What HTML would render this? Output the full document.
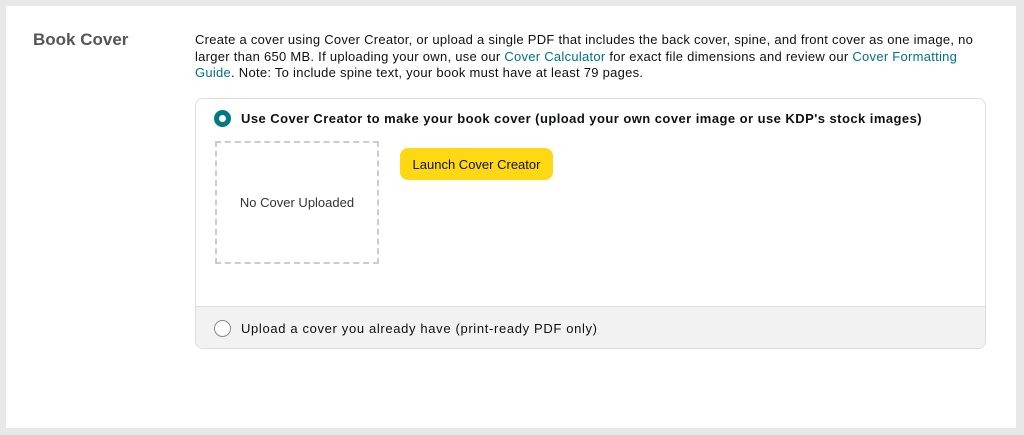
<!DOCTYPE html>
<html><head><meta charset="utf-8"><style>
*{box-sizing:border-box;margin:0;padding:0}
body{width:1024px;height:435px;background:#e8e8e8;font-family:"Liberation Sans",sans-serif;color:#0f1111;position:relative;overflow:hidden}
.panel{position:absolute;left:6px;top:6px;width:1010px;height:422px;background:#fff}
h2{position:absolute;left:33px;top:30px;font-size:17px;font-weight:bold;color:#555}
.desc{position:absolute;left:195px;top:32px;width:800px;font-size:13px;line-height:16.5px;letter-spacing:0.27px;white-space:nowrap}
a{color:#007185;text-decoration:none}
.box{position:absolute;left:195px;top:98px;width:791px;height:251px;border:1px solid #ddd;border-radius:8px;overflow:hidden;background:#fff}
.r1{position:absolute;left:18px;top:11px;font-size:13px;font-weight:bold;display:flex;align-items:center;letter-spacing:0.45px;white-space:nowrap}
.rad{width:17px;height:17px;border-radius:50%;margin-right:10px;flex:none}
.on{border:5px solid #007b86;background:#fff}
.off{border:1px solid #888;background:#fff}
.ph{position:absolute;left:19px;top:42px;width:164px;height:123px;border:2px dashed #ccc;font-size:13px;color:#333;display:flex;align-items:center;justify-content:center}
.btn{position:absolute;left:204px;top:49px;width:153px;height:32px;background:#ffd814;border-radius:8px;font-size:13px;display:flex;align-items:center;justify-content:center;color:#0f1111}
.ft{position:absolute;left:0;top:207px;width:100%;height:44px;background:#f2f2f2;border-top:1px solid #ddd;display:flex;align-items:center;padding-left:18px;font-size:13px;letter-spacing:0.65px}
</style></head><body>
<div class="panel"></div>
<h2>Book Cover</h2>
<div class="desc">Create a cover using Cover Creator, or upload a single PDF that includes the back cover, spine, and front cover as one image, no<br>larger than 650 MB. If uploading your own, use our <a>Cover Calculator</a> for exact file dimensions and review our <a>Cover Formatting</a><br><a>Guide</a>. Note: To include spine text, your book must have at least 79 pages.</div>
<div class="box">
<div class="r1"><span class="rad on"></span>Use Cover Creator to make your book cover (upload your own cover image or use KDP's stock images)</div>
<div class="ph">No Cover Uploaded</div>
<div class="btn">Launch Cover Creator</div>
<div class="ft"><span class="rad off"></span>Upload a cover you already have (print-ready PDF only)</div>
</div>
</body></html>
